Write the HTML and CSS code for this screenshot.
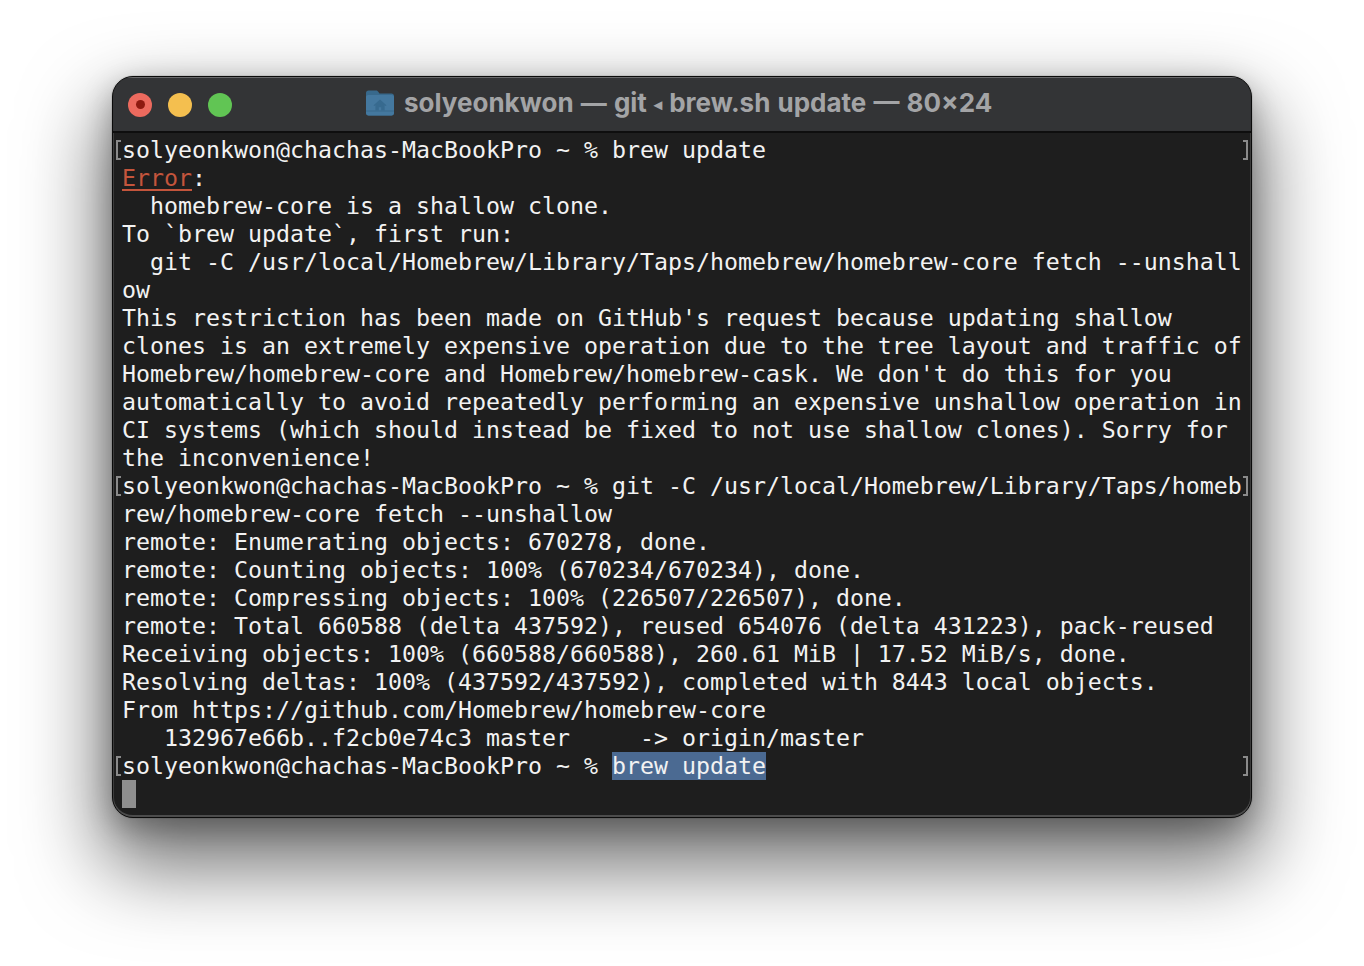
FILE: index.html
```html
<!DOCTYPE html>
<html lang="en">
<head>
<meta charset="utf-8">
<title>Terminal</title>
<link rel="stylesheet" href="styles.css">
</head>
<body>
<div class="window">
  <header class="titlebar">
    <div class="lights">
      <span class="light red"></span>
      <span class="light yellow"></span>
      <span class="light green"></span>
    </div>
    <div class="title">
      <svg class="folder" width="28" height="26" viewBox="0 0 28 26">
        <path d="M0 3C0 1.500 1 .5 2.500 .5h7.500c1 0 1.600.4 2.200 1.200L13.500 3.500H25.500C27 3.500 28 4.500 28 6V23c0 1.500-1 2.500-2.500 2.500h-23C1 25.500 0 24.500 0 23z" fill="#38698c"/>
        <path d="M0 7c0-1.200 1-2 2.500-2h23C27 5 28 5.800 28 7V23c0 1.500-1 2.500-2.500 2.500h-23C1 25.500 0 24.500 0 23z" fill="#44789f"/>
        <rect x="0" y="20.500" width="28" height="1" fill="#38688b"/>
        <path d="M14 9.500l-6.500 5.800 .9 .8 1-.9V20.500h3.400v-3.300h2.400v3.300h3.400V15.200l1 .9 .9-.8z" fill="#376a8f"/>
      </svg>
      <span class="title-text">solyeonkwon — git <span class="arrow">◂</span> brew.sh update — 80×24</span>
    </div>
  </header>
  <main class="screen">
    <div class="row prompt">solyeonkwon@chachas-MacBookPro ~ % brew update</div>
    <div class="row"><span class="error">Error</span>:</div>
    <div class="row">  homebrew-core is a shallow clone.</div>
    <div class="row">To `brew update`, first run:</div>
    <div class="row">  git -C /usr/local/Homebrew/Library/Taps/homebrew/homebrew-core fetch --unshall</div>
    <div class="row">ow</div>
    <div class="row">This restriction has been made on GitHub's request because updating shallow</div>
    <div class="row">clones is an extremely expensive operation due to the tree layout and traffic of</div>
    <div class="row">Homebrew/homebrew-core and Homebrew/homebrew-cask. We don't do this for you</div>
    <div class="row">automatically to avoid repeatedly performing an expensive unshallow operation in</div>
    <div class="row">CI systems (which should instead be fixed to not use shallow clones). Sorry for</div>
    <div class="row">the inconvenience!</div>
    <div class="row prompt">solyeonkwon@chachas-MacBookPro ~ % git -C /usr/local/Homebrew/Library/Taps/homeb</div>
    <div class="row">rew/homebrew-core fetch --unshallow</div>
    <div class="row">remote: Enumerating objects: 670278, done.</div>
    <div class="row">remote: Counting objects: 100% (670234/670234), done.</div>
    <div class="row">remote: Compressing objects: 100% (226507/226507), done.</div>
    <div class="row">remote: Total 660588 (delta 437592), reused 654076 (delta 431223), pack-reused</div>
    <div class="row">Receiving objects: 100% (660588/660588), 260.61 MiB | 17.52 MiB/s, done.</div>
    <div class="row">Resolving deltas: 100% (437592/437592), completed with 8443 local objects.</div>
    <div class="row">From https://github.com/Homebrew/homebrew-core</div>
    <div class="row">   132967e66b..f2cb0e74c3 master     -&gt; origin/master</div>
    <div class="row prompt">solyeonkwon@chachas-MacBookPro ~ % <span class="selected">brew update</span></div>
    <div class="row"><span class="cursor"></span></div>
  </main>
</div>
</body>
</html>
```
FILE: styles.css
```css
html, body {
  margin: 0;
  padding: 0;
  background: #fff;
}
body {
  width: 1364px;
  height: 966px;
  overflow: hidden;
  padding: 76px 0 0 112px;
  box-sizing: border-box;
}
.window {
  width: 1140px;
  height: 742px;
  box-sizing: border-box;
  border: 1px solid #0b0b0b;
  border-radius: 21px;
  overflow: hidden;
  display: flex;
  flex-direction: column;
  background: #1e1e1e;
  box-shadow: 0 0 0 1px rgba(0, 0, 0, .08), 0 40px 80px 10px rgba(0, 0, 0, .55), 0 10px 30px rgba(0, 0, 0, .28);
}
.titlebar {
  height: 56px;
  flex: none;
  box-sizing: border-box;
  display: flex;
  align-items: center;
  padding-left: 15px;
  background: #333436;
  border-top: 1px solid #69696b;
  border-bottom: 2px solid #0e0e0e;
}
.lights {
  display: flex;
  gap: 16px;
}
.light {
  width: 24px;
  height: 24px;
  border-radius: 50%;
  display: flex;
  align-items: center;
  justify-content: center;
}
.red { background: #ec6a5e; }
.red::after {
  content: "";
  width: 9px;
  height: 9px;
  border-radius: 50%;
  background: #8e1a10;
}
.yellow { background: #f4bf4f; }
.green { background: #61c554; }
.title {
  display: flex;
  align-items: center;
  gap: 10px;
  margin: 0 0 4px 134px;
}
.title-text {
  font-family: Inter, "Liberation Sans", Arial, sans-serif;
  font-weight: 700;
  font-size: 26px;
  word-spacing: 1px;
  color: #a3a4a6;
  white-space: pre;
}
.arrow {
  font-size: 16px;
  vertical-align: 2px;
}
.screen {
  flex: 1;
  padding: 3px 0 0 9px;
  border-radius: 0 0 20px 20px;
  box-shadow: inset 0 -2px 0 #4c4c4c, inset 1px 0 0 #3c3c3c, inset -1px 0 0 #3c3c3c;
  font-family: "DejaVu Sans Mono", monospace;
  font-size: 23.25px;
  line-height: 28px;
  color: #f2f2f2;
}
.row {
  height: 28px;
  white-space: pre;
  position: relative;
}
.prompt::before,
.prompt::after {
  content: "";
  position: absolute;
  top: 4px;
  width: 3px;
  height: 16px;
  border: 2px solid #8a8a8a;
}
.prompt::before {
  left: -6px;
  border-right: 0;
}
.prompt::after {
  right: 3px;
  border-left: 0;
}
.error {
  color: #c4553c;
  text-decoration: underline;
  text-decoration-thickness: 2px;
  text-underline-offset: 3px;
}
.selected {
  display: inline-block;
  background: #4b6a92;
  height: 28px;
}
.cursor {
  display: block;
  width: 14px;
  height: 28px;
  background: #8f8f8f;
}
```
